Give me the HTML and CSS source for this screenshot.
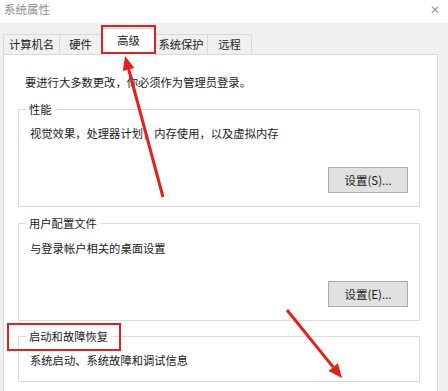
FILE: index.html
```html
<!DOCTYPE html>
<html lang="zh-CN">
<head>
    <meta charset="UTF-8">
    <title>系统属性</title>
    <link rel="stylesheet" href="styles.css">
</head>
<body>
    <div class="titlebar">
        <span class="title">系统属性</span>
        <span class="close">&#x2715;</span>
    </div>

    <div class="tabs">
        <div class="tab t1">计算机名</div>
        <div class="tab t2">硬件</div>
        <div class="tab active">高级</div>
        <div class="tab t4">系统保护</div>
        <div class="tab t5">远程</div>
    </div>

    <div class="panel">
        <p class="intro">要进行大多数更改，你必须作为管理员登录。</p>

        <div class="group">
            <span class="legend">性能</span>
            <p class="desc">视觉效果，处理器计划，内存使用，以及虚拟内存</p>
            <div class="btn-row"><button>设置(S)...</button></div>
        </div>

        <div class="group g2">
            <span class="legend">用户配置文件</span>
            <p class="desc">与登录帐户相关的桌面设置</p>
            <div class="btn-row"><button>设置(E)...</button></div>
        </div>

        <div class="group g3">
            <span class="legend">启动和故障恢复</span>
            <p class="desc">系统启动、系统故障和调试信息</p>
        </div>
    </div>

    <!-- red annotations drawn over the dialog -->
    <svg class="marks" width="448" height="391" viewBox="0 0 448 391">
        <rect x="102" y="26" width="53" height="27" fill="none" stroke="#e3211b" stroke-width="2"/>
        <rect x="8" y="324" width="112" height="26" fill="none" stroke="#e3211b" stroke-width="2"/>
        <line x1="163" y1="197" x2="128.6" y2="69" stroke="#e3211b" stroke-width="3"/>
        <polygon points="125,56 134.4,68 122.8,71.1" fill="#e3211b"/>
        <line x1="287" y1="310" x2="333.2" y2="367.1" stroke="#e3211b" stroke-width="3"/>
        <polygon points="342,378 328.5,370.9 337.9,363.3" fill="#e3211b"/>
    </svg>
</body>
</html>
```

FILE: styles.css
```css
body {
    margin: 0;
    width: 448px;
    height: 391px;
    overflow: hidden;
    position: relative;
    background: #f0f0f0;
    font-family: "Noto Sans CJK SC", "Noto Sans", sans-serif;
    font-size: 11.3px;
    color: #1a1a1a;
}

.titlebar {
    height: 23px;
    background: #fff;
    display: flex;
    justify-content: space-between;
    align-items: center;
    padding: 0 8px 6px 4px;
    box-sizing: border-box;
}
.title {
    color: #8c8c8c;
    font-size: 11.5px;
}
.close {
    color: #9a9a9a;
    font-size: 12px;
}

.tabs {
    display: flex;
    align-items: flex-end;
    padding-left: 3px;
    margin-top: 5px;
    height: 26px;
    position: relative;
    z-index: 1;
}
.tab {
    height: 20px;
    box-sizing: border-box;
    border: 1px solid #d9d9d9;
    border-bottom: none;
    background: #f0f0f0;
    display: flex;
    align-items: center;
    justify-content: center;
    line-height: 1;
}
.t1 { width: 57px; }
.t2 { width: 42px; border-left: none; }
.t4 { width: 53px; border-left: none; }
.t5 { width: 44px; border-left: none; }
.tab.active {
    width: 53px;
    height: 27px;
    background: #fff;
    margin-bottom: -1px;
    padding-bottom: 3px;
}

.panel {
    margin-left: 3px;
    width: 435px;
    height: 338px;
    overflow: hidden;
    box-sizing: border-box;
    background: #fff;
    border: 1px solid #d9d9d9;
    border-bottom: none;
    padding: 0 17px 0 14px;
}
.intro {
    margin: 19px 0 0 7px;
    line-height: 16px;
}

.group {
    border: 1px solid #dcdcdc;
    margin-top: 19px;
    padding: 0 11px 13px 11px;
}
.g2 { margin-top: 16px; }
.g3 { margin-top: 15px; }
.legend {
    display: table;
    margin: -8px 0 0 -4px;
    padding: 0 3px;
    background: #fff;
    line-height: 15px;
}
.desc {
    margin: 8px 0 0 0;
    line-height: 16px;
}
.g2 .desc { margin-top: 9px; }
.btn-row {
    display: flex;
    justify-content: flex-end;
    margin-top: 26px;
}
.g2 .btn-row { margin-top: 25px; }
button {
    width: 80px;
    height: 26px;
    background: #e1e1e1;
    border: 1px solid #adadad;
    font-family: inherit;
    font-size: 11.5px;
    color: #1a1a1a;
    padding: 0;
}

.marks {
    position: absolute;
    left: 0;
    top: 0;
    pointer-events: none;
    z-index: 2;
}
```
